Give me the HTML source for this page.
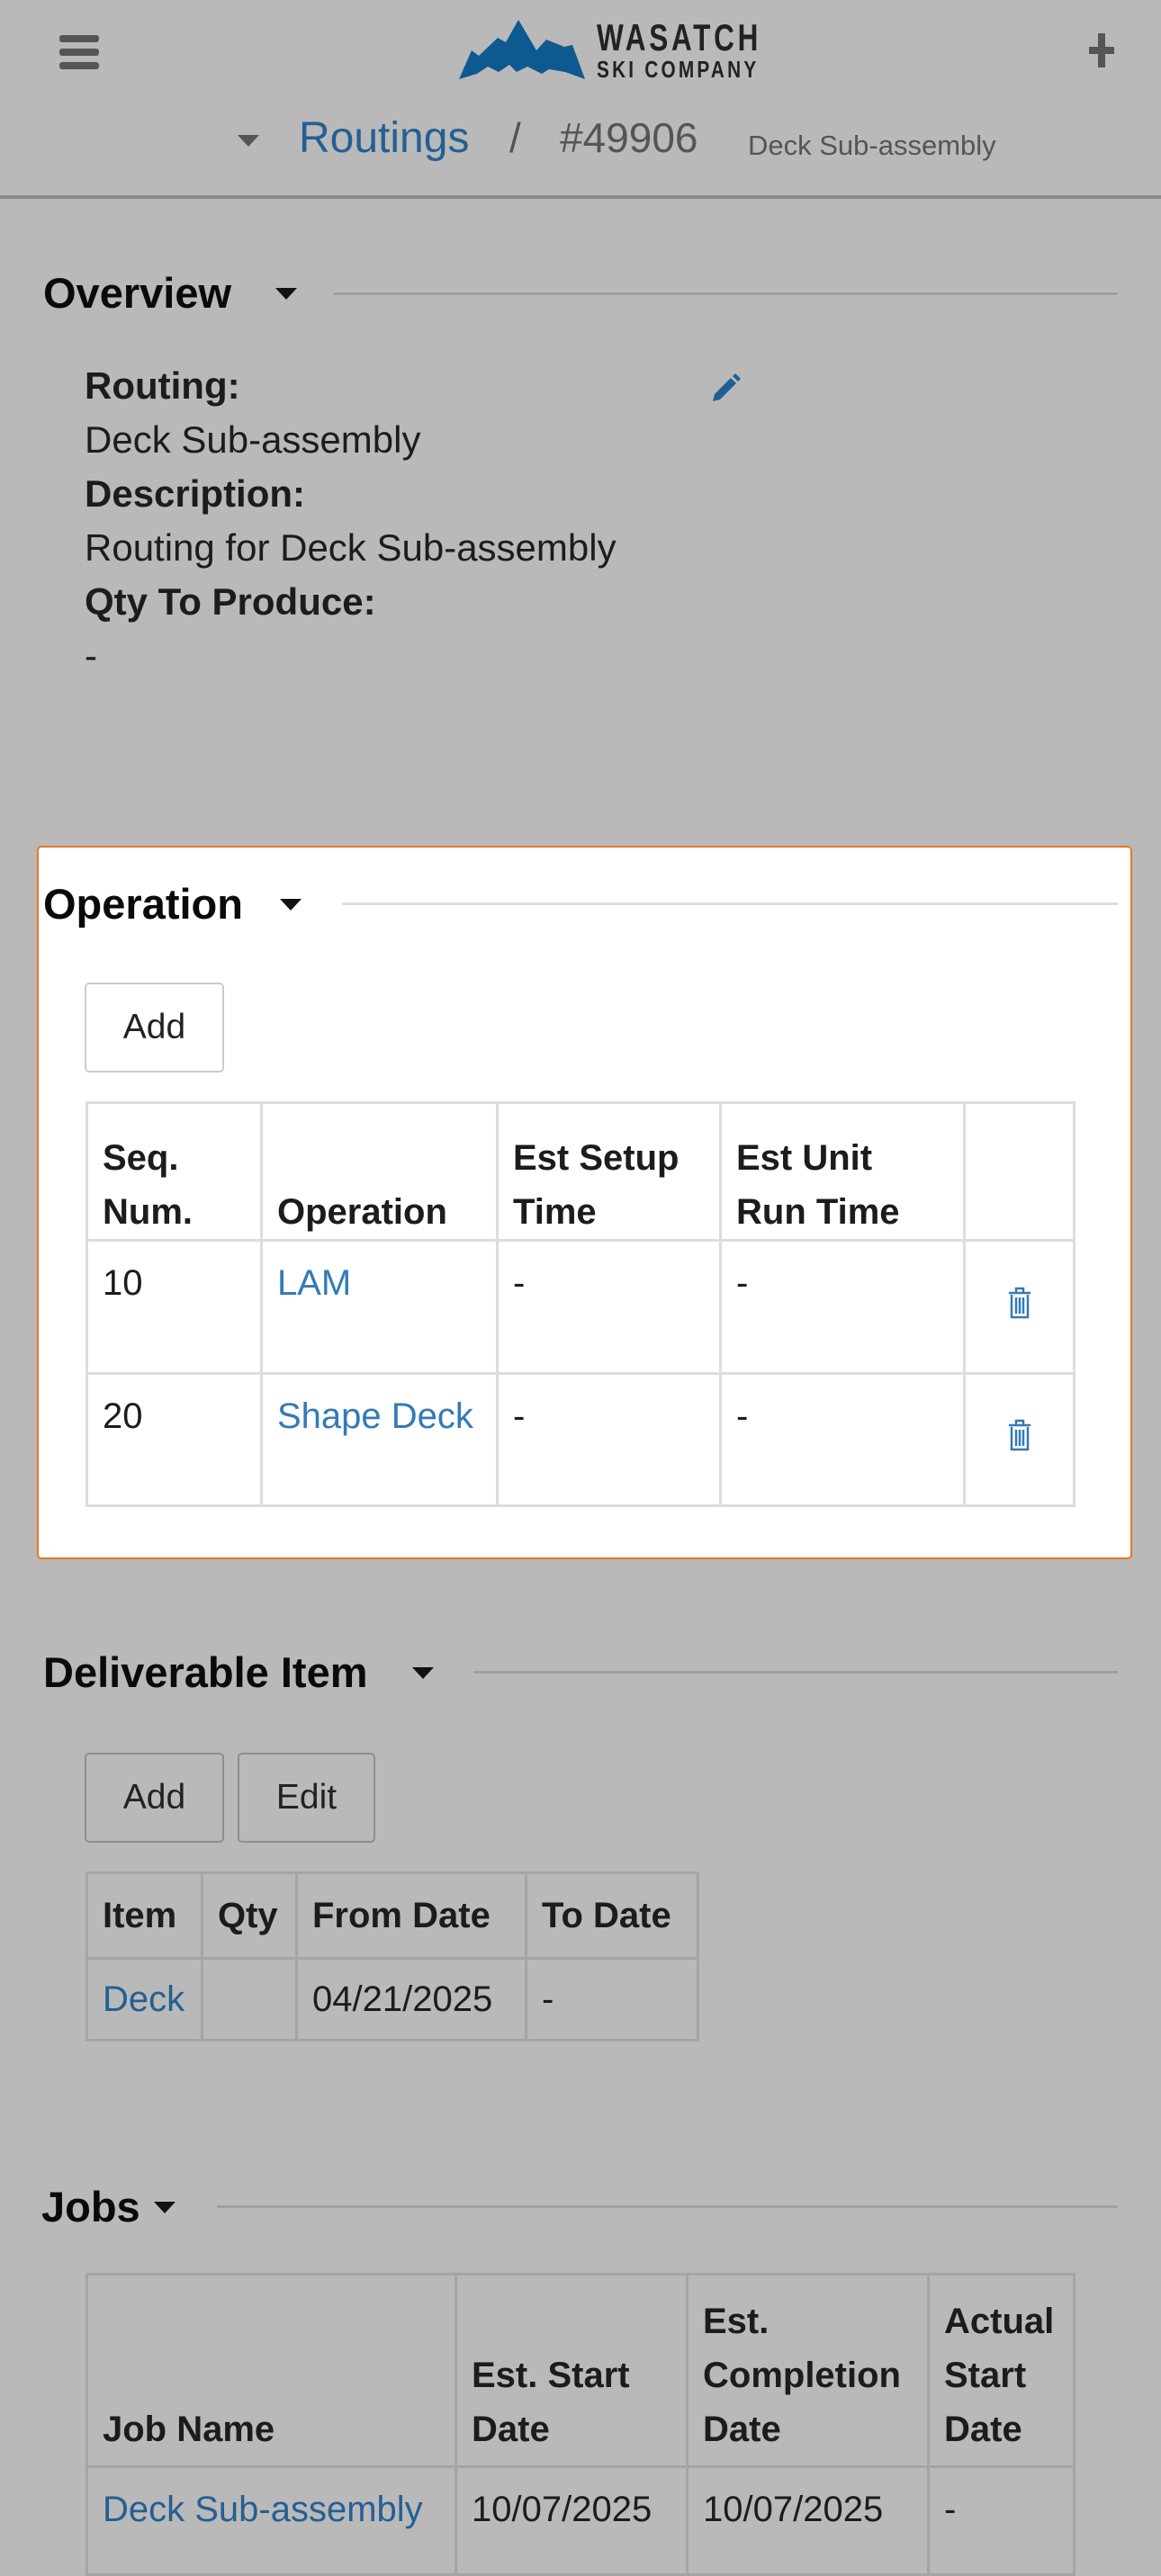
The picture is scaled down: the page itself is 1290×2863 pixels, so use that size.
<!DOCTYPE html>
<html><head><meta charset="utf-8"><style>
*{margin:0;padding:0;box-sizing:border-box}
body{width:1290px;height:2796px;background:#b9b9b9;font-family:"Liberation Sans",sans-serif;color:#1c1c1c;position:relative;overflow:hidden}
.a{position:absolute;white-space:nowrap}
.h{font-size:47px;font-weight:bold;color:#0a0a0a}
.ln{position:absolute;height:3px;background:#a0a0a0}
.car{position:absolute;width:0;height:0;border-left:12px solid transparent;border-right:12px solid transparent;border-top:13px solid #111}
.t{font-size:42px}
.b{font-weight:bold}
.lk{color:#245f94}
.lkw{color:#337ab7}
.btn{position:absolute;border:2px solid #8e8e8e;border-radius:5px;font-size:39px;text-align:center;color:#222}
table{position:absolute;border-collapse:collapse;font-size:40px}
td,th{text-align:left;vertical-align:top;padding:0 16px;line-height:60px}
th{vertical-align:bottom;font-weight:bold}
</style></head><body>
<!-- header -->
<div class="a" style="left:66px;top:39px;width:44px;height:8px;background:#555;border-radius:3px"></div>
<div class="a" style="left:66px;top:54px;width:44px;height:8px;background:#555;border-radius:3px"></div>
<div class="a" style="left:66px;top:69px;width:44px;height:8px;background:#555;border-radius:3px"></div>
<div class="a" style="left:1210px;top:52px;width:28px;height:8px;background:#555"></div>
<div class="a" style="left:1220px;top:37px;width:8px;height:38px;background:#555"></div>
<svg class="a" style="left:510px;top:22px" width="160" height="68" viewBox="0 0 160 68"><path d="M0 66 L14 34 L22 40 L43 20 L52 25 L66 0 L86 34 L97 22 L117 30 L126 28 L140 66 L118 58 L100 55 L92 60 L76 52 L64 58 L56 50 L44 58 L32 52 L20 60 Z" fill="#0c5a8f"/></svg>
<div class="a" style="left:663px;top:18px;font-size:42px;font-weight:bold;letter-spacing:5px;color:#222;transform:scaleX(0.75);transform-origin:0 0">WASATCH</div>
<div class="a" style="left:663px;top:62px;font-size:26px;font-weight:bold;letter-spacing:4px;color:#222;transform:scaleX(0.8);transform-origin:0 0">SKI COMPANY</div>
<div class="car" style="left:264px;top:150px;border-top-color:#555"></div>
<div class="a lk" style="left:332px;top:126px;font-size:48px">Routings</div>
<div class="a" style="left:566px;top:126px;font-size:46px;color:#555">/</div>
<div class="a" style="left:622px;top:126px;font-size:46px;color:#555">#49906</div>
<div class="a" style="left:831px;top:144px;font-size:31px;color:#555">Deck Sub-assembly</div>
<div class="a" style="left:0;top:217px;width:1290px;height:4px;background:#888"></div>
<!-- overview -->
<div class="a h" style="left:48px;top:298px">Overview</div>
<div class="car" style="left:306px;top:320px"></div>
<div class="ln" style="left:371px;top:325px;width:871px"></div>
<div class="a t b" style="left:94px;top:405px">Routing:</div>
<div class="a t" style="left:94px;top:465px">Deck Sub-assembly</div>
<div class="a t b" style="left:94px;top:525px">Description:</div>
<div class="a t" style="left:94px;top:585px">Routing for Deck Sub-assembly</div>
<div class="a t b" style="left:94px;top:645px">Qty To Produce:</div>
<div class="a t" style="left:94px;top:705px">-</div>
<svg class="a" style="left:788px;top:414px" width="36" height="36" viewBox="0 0 36 36"><path d="M4 32 L6 24 L24 6 L30 12 L12 30 Z M26 4 L29 1 L35 7 L32 10 Z" fill="#1f5f96"/></svg>
<!-- operation panel -->
<div class="a" style="left:41px;top:940px;width:1217px;height:793px;background:#fff;border:2px solid #e87722;border-radius:5px"></div>
<div class="a h" style="left:48px;top:977px">Operation</div>
<div class="car" style="left:311px;top:999px"></div>
<div class="ln" style="left:380px;top:1003px;width:862px;background:#ddd"></div>
<div class="btn" style="left:94px;top:1092px;width:155px;height:100px;line-height:96px;border-color:#ccc">Add</div>
<table style="left:95px;top:1224px;width:1100px">
<tr style="height:153px"><th style="width:194px;border:3px solid #ddd">Seq.<br>Num.</th><th style="width:262px;border:3px solid #ddd">Operation</th><th style="width:248px;border:3px solid #ddd">Est Setup<br>Time</th><th style="width:271px;border:3px solid #ddd">Est Unit<br>Run Time</th><th style="border:3px solid #ddd"></th></tr>
<tr style="height:148px"><td style="border:3px solid #ddd;padding-top:16px">10</td><td class="lkw" style="border:3px solid #ddd;padding-top:16px">LAM</td><td style="border:3px solid #ddd;padding-top:16px">-</td><td style="border:3px solid #ddd;padding-top:16px">-</td><td style="border:3px solid #ddd;vertical-align:middle;text-align:center"><svg width="26" height="36" viewBox="0 0 26 36"><path d="M1 7 H25 M9 7 V2 H17 V7 M4 9 V34 H22 V9 M9 12 V30 M13 12 V30 M17 12 V30" stroke="#337ab7" stroke-width="2.5" fill="none"/></svg></td></tr>
<tr style="height:147px"><td style="border:3px solid #ddd;padding-top:16px">20</td><td class="lkw" style="border:3px solid #ddd;padding-top:16px">Shape Deck</td><td style="border:3px solid #ddd;padding-top:16px">-</td><td style="border:3px solid #ddd;padding-top:16px">-</td><td style="border:3px solid #ddd;vertical-align:middle;text-align:center"><svg width="26" height="36" viewBox="0 0 26 36"><path d="M1 7 H25 M9 7 V2 H17 V7 M4 9 V34 H22 V9 M9 12 V30 M13 12 V30 M17 12 V30" stroke="#337ab7" stroke-width="2.5" fill="none"/></svg></td></tr>
</table>
<!-- deliverable -->
<div class="a h" style="left:48px;top:1831px">Deliverable Item</div>
<div class="car" style="left:458px;top:1853px"></div>
<div class="ln" style="left:526px;top:1857px;width:716px"></div>
<div class="btn" style="left:94px;top:1948px;width:155px;height:100px;line-height:96px">Add</div>
<div class="btn" style="left:264px;top:1948px;width:153px;height:100px;line-height:96px">Edit</div>
<table style="left:95px;top:2080px">
<tr style="height:95px"><th style="width:128px;border:3px solid #a5a5a5;vertical-align:middle">Item</th><th style="width:105px;border:3px solid #a5a5a5;vertical-align:middle">Qty</th><th style="width:255px;border:3px solid #a5a5a5;vertical-align:middle">From Date</th><th style="width:191px;border:3px solid #a5a5a5;vertical-align:middle">To Date</th></tr>
<tr style="height:91px"><td class="lk" style="border:3px solid #a5a5a5;vertical-align:middle">Deck</td><td style="border:3px solid #a5a5a5"></td><td style="border:3px solid #a5a5a5;vertical-align:middle">04/21/2025</td><td style="border:3px solid #a5a5a5;vertical-align:middle">-</td></tr>
</table>
<!-- jobs -->
<div class="a h" style="left:46px;top:2425px">Jobs</div>
<div class="car" style="left:171px;top:2447px"></div>
<div class="ln" style="left:241px;top:2451px;width:1001px"></div>
<table style="left:95px;top:2526px;table-layout:fixed;width:1097px">
<tr style="height:214px"><th style="width:410px;border:3px solid #a5a5a5;padding-bottom:10px">Job Name</th><th style="width:257px;border:3px solid #a5a5a5;padding-bottom:10px">Est. Start<br>Date</th><th style="width:268px;border:3px solid #a5a5a5;padding-bottom:10px">Est.<br>Completion<br>Date</th><th style="width:162px;border:3px solid #a5a5a5;padding-bottom:10px">Actual<br>Start<br>Date</th></tr>
<tr style="height:120px"><td class="lk" style="border:3px solid #a5a5a5;padding-top:16px;white-space:nowrap;overflow:hidden">Deck Sub-assembly</td><td style="border:3px solid #a5a5a5;padding-top:16px">10/07/2025</td><td style="border:3px solid #a5a5a5;padding-top:16px">10/07/2025</td><td style="border:3px solid #a5a5a5;padding-top:16px">-</td></tr>
</table>
</body></html>
